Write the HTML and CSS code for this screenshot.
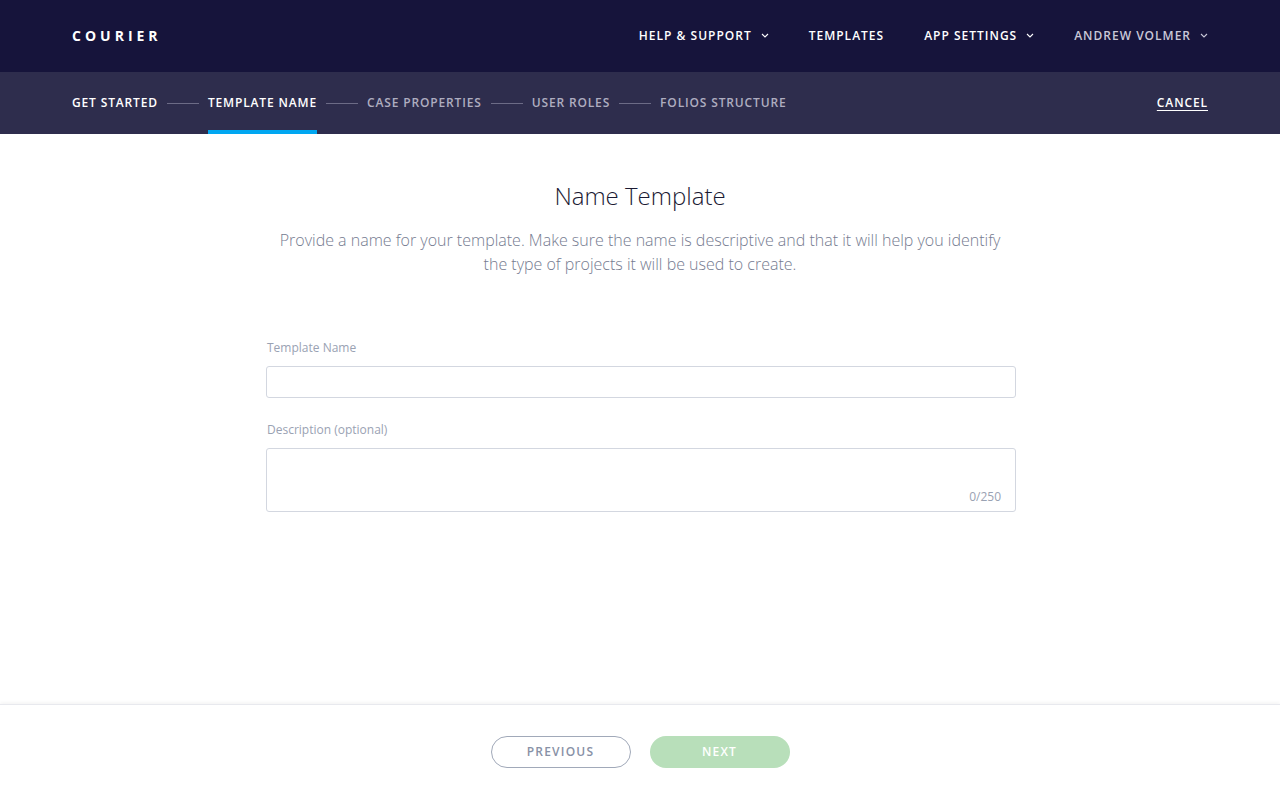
FILE: index.html
```html
<!DOCTYPE html>
<html lang="en">
<head>
    <meta charset="UTF-8">
    <meta name="viewport" content="width=device-width, initial-scale=1.0">
    <title>Courier - Name Template</title>
    <link rel="stylesheet" href="styles.css">
</head>
<body>
    <header class="topbar">
        <div class="logo">COURIER</div>
        <nav class="menu">
            <a class="menu-item">HELP &amp; SUPPORT <svg class="chev" viewBox="0 0 8 5"><path d="M1 1l3 3 3-3"/></svg></a>
            <a class="menu-item">TEMPLATES</a>
            <a class="menu-item">APP SETTINGS <svg class="chev" viewBox="0 0 8 5"><path d="M1 1l3 3 3-3"/></svg></a>
            <a class="menu-item user">ANDREW VOLMER <svg class="chev" viewBox="0 0 8 5"><path d="M1 1l3 3 3-3"/></svg></a>
        </nav>
    </header>

    <div class="stepbar">
        <ol class="steps">
            <li class="step done">GET STARTED</li>
            <li class="sep"></li>
            <li class="step active">TEMPLATE NAME</li>
            <li class="sep"></li>
            <li class="step">CASE PROPERTIES</li>
            <li class="sep"></li>
            <li class="step">USER ROLES</li>
            <li class="sep"></li>
            <li class="step">FOLIOS STRUCTURE</li>
        </ol>
        <a class="cancel">CANCEL</a>
    </div>

    <main class="content">
        <h1 class="title">Name Template</h1>
        <p class="intro">Provide a name for your template. Make sure the name is descriptive and that it will help you identify the type of projects it will be used to create.</p>

        <form class="form">
            <label class="field">
                <span class="label">Template Name</span>
                <input class="input" type="text">
            </label>
            <label class="field">
                <span class="label">Description (optional)</span>
                <span class="area-wrap">
                    <textarea class="textarea" maxlength="250"></textarea>
                    <span class="counter">0/250</span>
                </span>
            </label>
        </form>
    </main>

    <footer class="actions">
        <button class="btn btn-outline">PREVIOUS</button>
        <button class="btn btn-next" disabled>NEXT</button>
    </footer>
</body>
</html>
```

FILE: styles.css
```css
* {
    box-sizing: border-box;
}
body {
    margin: 0;
    font-family: "Open Sans", Arial, sans-serif;
    background-color: #fff;
    height: 800px;
    display: flex;
    flex-direction: column;
}
.topbar {
    height: 72px;
    background-color: #16143b;
    display: flex;
    align-items: center;
    justify-content: space-between;
    padding: 0 72px 2px;
}
.logo {
    color: #fff;
    font-size: 14px;
    font-weight: 700;
    letter-spacing: 4px;
}
.menu {
    display: flex;
    align-items: center;
    gap: 40px;
}
.menu-item {
    color: #fff;
    font-size: 12px;
    font-weight: 600;
    letter-spacing: 1px;
    display: flex;
    align-items: center;
    gap: 9px;
}
.menu-item.user {
    color: #c9c8d8;
}
.chev {
    width: 8px;
    height: 5px;
    fill: none;
    stroke: currentColor;
    stroke-width: 1.1;
}
.stepbar {
    height: 62px;
    background-color: #2e2d4d;
    display: flex;
    align-items: stretch;
    justify-content: space-between;
    padding: 0 72px;
}
.steps {
    list-style: none;
    margin: 0;
    padding: 0;
    display: flex;
    align-items: stretch;
    gap: 9px;
}
.step {
    color: #aeadc0;
    font-size: 12px;
    font-weight: 600;
    letter-spacing: 0.85px;
    display: flex;
    align-items: center;
    border-bottom: 4px solid transparent;
    padding-top: 2px;
}
.step.done {
    color: #fff;
}
.step.active {
    color: #fff;
    border-bottom-color: #00a7f1;
}
.sep {
    width: 32px;
    align-self: center;
    border-top: 1px solid #6c6b86;
}
.cancel {
    color: #fff;
    font-size: 12px;
    font-weight: 600;
    letter-spacing: 0.9px;
    text-decoration: underline;
    text-underline-offset: 3px;
    align-self: center;
    margin-top: -2px;
}
.content {
    flex: 1;
    width: 750px;
    margin: 0 auto;
    padding-top: 46px;
    text-align: center;
}
.title {
    margin: 0;
    font-size: 24px;
    font-weight: 300;
    color: #1b1a33;
    line-height: 32px;
}
.intro {
    max-width: 730px;
    margin: 16px auto 0;
    font-size: 16px;
    font-weight: 300;
    line-height: 24px;
    color: #757b90;
}
.form {
    margin: 63px -1px 0 1px;
    display: flex;
    flex-direction: column;
    gap: 23px;
    text-align: left;
}
.field {
    display: flex;
    flex-direction: column;
    gap: 10px;
}
.label {
    font-size: 12px;
    color: #9aa2b3;
    padding-left: 1px;
}
.input,
.textarea {
    width: 100%;
    border: 1px solid #d3d7e0;
    border-radius: 3px;
    font-family: inherit;
    font-size: 14px;
    outline: none;
}
.input {
    height: 32px;
}
.area-wrap {
    position: relative;
    display: block;
}
.textarea {
    height: 64px;
    resize: none;
    display: block;
}
.counter {
    position: absolute;
    right: 15px;
    bottom: 7px;
    font-size: 12px;
    color: #9aa2b3;
}
.actions {
    height: 96px;
    border-top: 1px solid #e8e9ee;
    box-shadow: 0 -2px 3px rgba(0, 0, 0, 0.04);
    display: flex;
    align-items: center;
    justify-content: center;
    gap: 19px;
    padding-bottom: 2px;
}
.btn {
    width: 140px;
    height: 32px;
    border-radius: 16px;
    font-family: inherit;
    font-size: 12px;
    font-weight: 600;
    letter-spacing: 1.2px;
}
.btn-outline {
    background: #fff;
    border: 1px solid #a1a9b9;
    color: #8891a6;
}
.btn-next {
    background: #b8dfba;
    border: none;
    color: #fff;
}
```
